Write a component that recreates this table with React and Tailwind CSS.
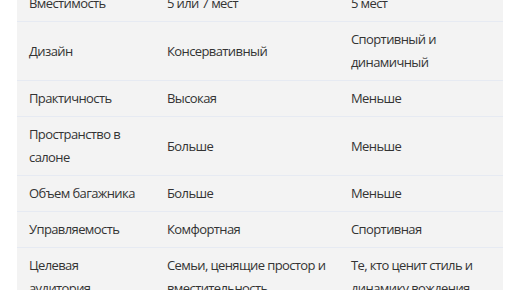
export default function App() {
  const rows = [
    ["Вместимость", "5 или 7 мест", "5 мест"],
    ["Дизайн", "Консервативный", "Спортивный и динамичный"],
    ["Практичность", "Высокая", "Меньше"],
    ["Пространство в салоне", "Больше", "Меньше"],
    ["Объем багажника", "Больше", "Меньше"],
    ["Управляемость", "Комфортная", "Спортивная"],
    ["Целевая аудитория", "Семьи, ценящие простор и вместительность", "Те, кто ценит стиль и динамику вождения"],
  ];
  return (
    <div className="w-[516px] h-[290px] overflow-hidden bg-white">
      <div className="ml-[17px] mt-[-14px] w-[486px] bg-[#f3f3f3]">
        <table className="w-full table-fixed border-collapse text-[13px] leading-[23px] tracking-[-0.6px] text-[#333333]" style={{ fontFamily: '"Open Sans", "Noto Sans", sans-serif' }}>
          <colgroup>
            <col className="w-[138px]" />
            <col className="w-[184px]" />
            <col className="w-[164px]" />
          </colgroup>
          <tbody>
            {rows.map((r, i) => (
              <tr key={i} className="border-b border-[#e6eaf2]">
                <td className="pl-3 pr-4 py-[6px] align-middle">{r[0]}</td>
                <td className="pl-3 pr-2 py-[6px] align-middle">{r[1]}</td>
                <td className="pl-3 pr-2 py-[6px] align-middle">{r[2]}</td>
              </tr>
            ))}
          </tbody>
        </table>
      </div>
    </div>
  );
}
